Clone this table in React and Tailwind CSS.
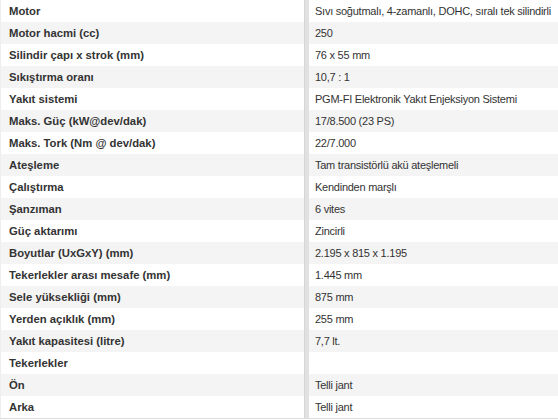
import React from "react";

const specs = [
    ["Motor", "Sıvı soğutmalı, 4-zamanlı, DOHC, sıralı tek silindirli"],
    ["Motor hacmi (cc)", "250"],
    ["Silindir çapı x strok (mm)", "76 x 55 mm"],
    ["Sıkıştırma oranı", "10,7 : 1"],
    ["Yakıt sistemi", "PGM-FI Elektronik Yakıt Enjeksiyon Sistemi"],
    ["Maks. Güç (kW@dev/dak)", "17/8.500 (23 PS)"],
    ["Maks. Tork (Nm @ dev/dak)", "22/7.000"],
    ["Ateşleme", "Tam transistörlü akü ateşlemeli"],
    ["Çalıştırma", "Kendinden marşlı"],
    ["Şanzıman", "6 vites"],
    ["Güç aktarımı", "Zincirli"],
    ["Boyutlar (UxGxY) (mm)", "2.195 x 815 x 1.195"],
    ["Tekerlekler arası mesafe (mm)", "1.445 mm"],
    ["Sele yüksekliği (mm)", "875 mm"],
    ["Yerden açıklık (mm)", "255 mm"],
    ["Yakıt kapasitesi (litre)", "7,7 lt."],
    ["Tekerlekler", ""],
    ["Ön", "Telli jant"],
    ["Arka", "Telli jant"],
]

const App = () => {
    return (
        <div className="w-[558px] h-[420px] overflow-hidden bg-white text-[#333]" style={{ fontFamily: '"Liberation Sans", Arial, sans-serif' }}>
            <div className="flex flex-col border-b border-[#dcdcdc]">
                {specs.map(([label, value], i) => (
                    <div key={i} className={"grid grid-cols-[304px_5px_1fr] h-[22px] " + (i % 2 === 1 ? "bg-[#f4f4f4]" : "bg-white")}>
                        <div className="flex items-center pl-2 font-bold text-[11.3px] text-[#333] border-l border-[#eeeeee] whitespace-nowrap">{label}</div>
                        <div className="bg-[#e1e1e1] border-l border-[#d6d6d6]"></div>
                        <div className="flex items-center pl-[6px] text-[11px] tracking-[-0.25px] text-[#333] whitespace-nowrap">{value}</div>
                    </div>
                ))}
            </div>
        </div>
    )
}
export default App
